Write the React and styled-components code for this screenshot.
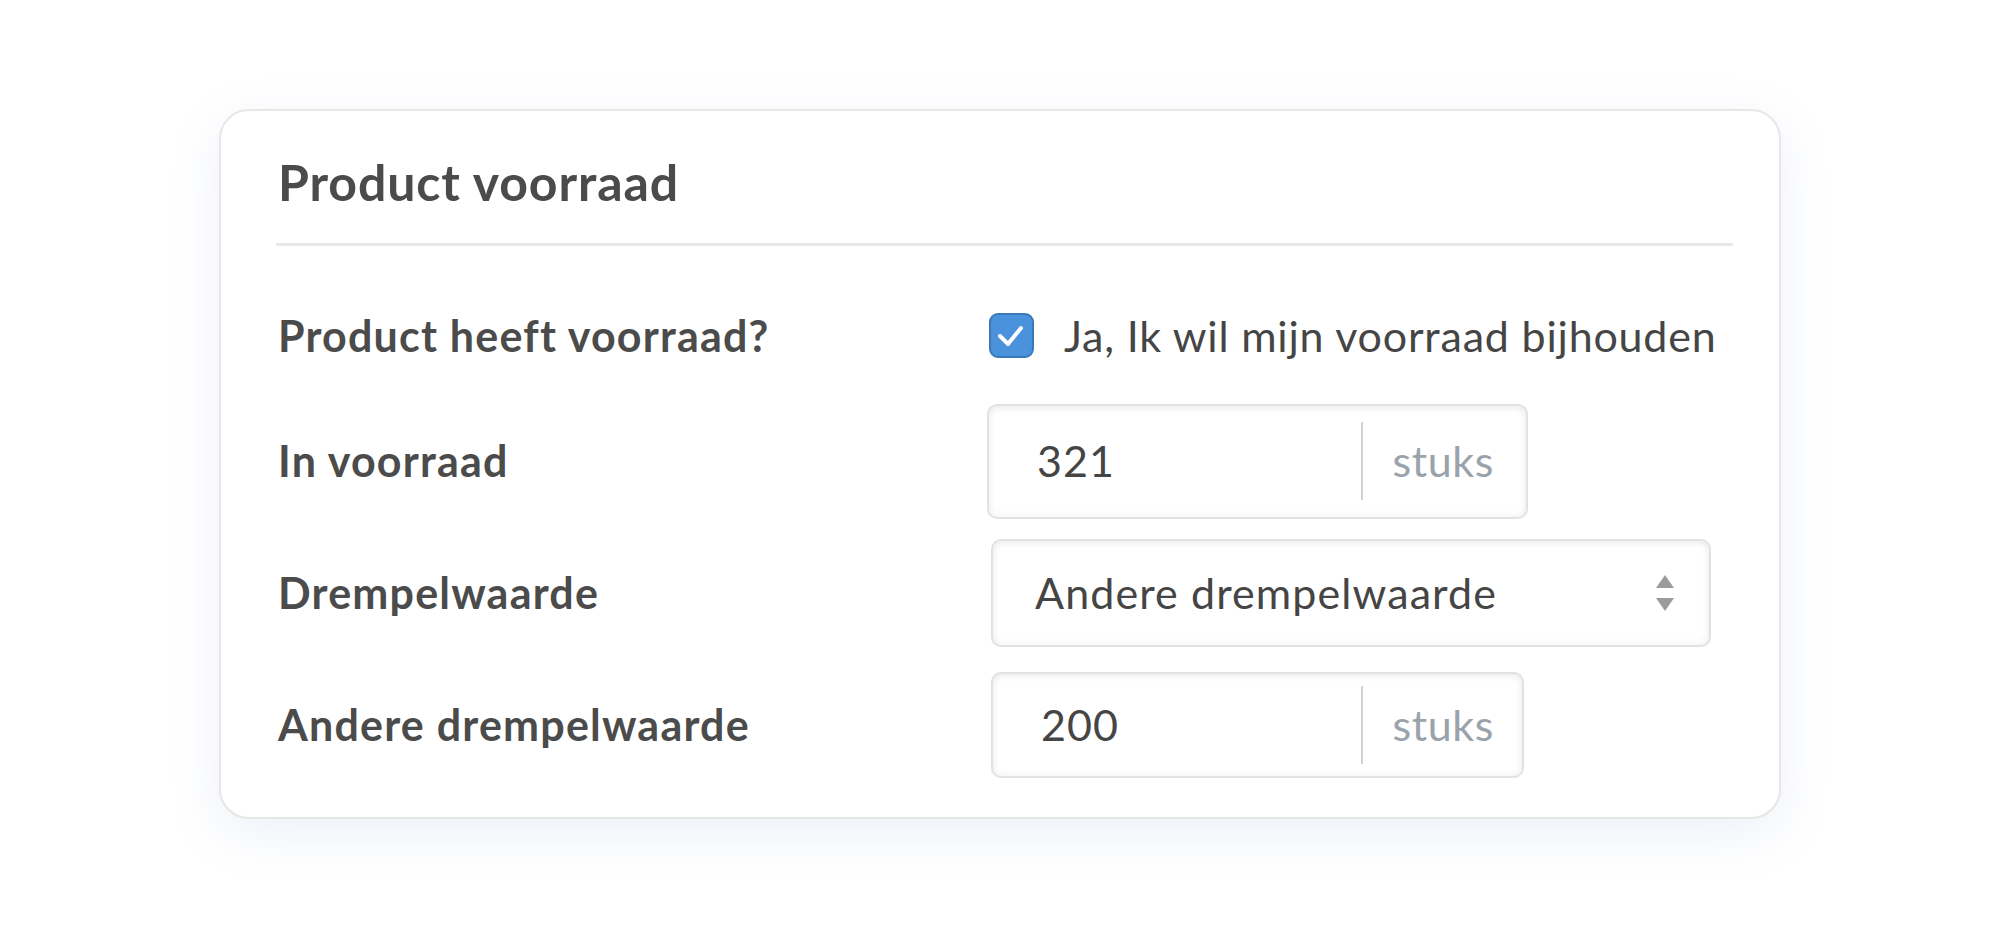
import React from "react"
import styled, { createGlobalStyle } from "styled-components"

const GlobalStyle = createGlobalStyle`
  html, body {
    margin: 0;
    background: #ffffff;
  }
  body {
    font-family: Lato, "Liberation Sans", sans-serif;
    color: #4d4d4d;
  }
`

const Page = styled.div`
  display: flex;
  justify-content: center;
  padding-top: 109px;
  min-height: 942px;
  box-sizing: border-box;
`

const Card = styled.section`
  box-sizing: border-box;
  width: 1562px;
  height: 710px;
  background: #fff;
  border: 2px solid #e7e7e8;
  border-radius: 30px;
  box-shadow: 0 14px 50px rgba(110, 140, 200, 0.13);
  padding: 41px 46px 0 57px;
`

const Title = styled.h2`
  margin: 0;
  font-size: 50px;
  line-height: 1.2;
  font-weight: 700;
  letter-spacing: 0.9px;
  color: #4b4b4b;
`

const Divider = styled.hr`
  margin: 31px 0 0 -2px;
  border: 0;
  height: 3px;
  background: #e8e8e8;
`

const Row = styled.div`
  display: flex;
  align-items: center;
  margin-top: ${p => p.$space}px;
`

const Label = styled.div`
  width: 711px;
  flex-shrink: 0;
  font-size: 43px;
  line-height: 1.2;
  font-weight: 700;
  letter-spacing: 1.2px;
  color: #4b4b4b;
`

const CheckLabel = styled.label`
  display: flex;
  align-items: center;
  gap: 30px;
  font-size: 43px;
  line-height: 1.2;
  letter-spacing: 0.8px;
  color: #454545;
`

const CheckBox = styled.span`
  box-sizing: border-box;
  width: 45px;
  height: 45px;
  border-radius: 9px;
  background: #4a92dc;
  border: 2px solid #3a79b9;
  display: flex;
  align-items: center;
  justify-content: center;
`

const Field = styled.div`
  box-sizing: border-box;
  display: flex;
  align-items: center;
  width: ${p => p.$width}px;
  height: ${p => p.$height}px;
  margin-left: ${p => p.$shift || 0}px;
  border: 2px solid #e2e2e2;
  border-radius: 10px;
  background: #fff;
  box-shadow: inset 0 0 10px rgba(0, 0, 0, 0.06), inset 0 3px 6px rgba(0, 0, 0, 0.04);
`

const Value = styled.div`
  flex: 1;
  padding-left: ${p => p.$pad || 48}px;
  font-size: 43px;
  line-height: 1.2;
  letter-spacing: 1.1px;
  color: #454545;
`

const Sep = styled.div`
  width: 2px;
  height: 78px;
  background: #d2d2d2;
`

const Unit = styled.div`
  padding: 0 ${p => p.$right}px 0 30px;
  font-size: 43px;
  line-height: 1.2;
  letter-spacing: 0.6px;
  color: #9aa2ab;
`

const Arrows = styled.div`
  display: flex;
  flex-direction: column;
  align-items: center;
  gap: 10px;
  margin-right: 35px;
`

const Tri = styled.span`
  width: 0;
  height: 0;
  border-left: 9px solid transparent;
  border-right: 9px solid transparent;
  ${p => (p.$up ? "border-bottom" : "border-top")}: 13px solid #9b9b9b;
`

const UnitField = ({ value, width, height, shift, right }) => (
  <Field $width={width} $height={height} $shift={shift}>
    <Value>{value}</Value>
    <Sep />
    <Unit $right={right}>stuks</Unit>
  </Field>
)

export default function App() {
  return (
    <>
      <GlobalStyle />
      <Page>
        <Card>
          <Title>Product voorraad</Title>
          <Divider />

          <Row $space={64}>
            <Label>Product heeft voorraad?</Label>
            <CheckLabel>
              <CheckBox>
                <svg width="41" height="41" viewBox="0 0 41 41">
                  <polyline points="9,21 17,29 30,13" fill="none" stroke="#fff" strokeWidth="4" strokeLinecap="round" strokeLinejoin="round" />
                </svg>
              </CheckBox>
              Ja, Ik wil mijn voorraad bijhouden
            </CheckLabel>
          </Row>

          <Row $space={42}>
            <Label>In voorraad</Label>
            <UnitField value="321" width={541} height={115} shift={-2} right={32} />
          </Row>

          <Row $space={20}>
            <Label>Drempelwaarde</Label>
            <Field $width={720} $height={108} $shift={2}>
              <Value $pad={42}>Andere drempelwaarde</Value>
              <Arrows>
                <Tri $up />
                <Tri />
              </Arrows>
            </Field>
          </Row>

          <Row $space={25}>
            <Label>Andere drempelwaarde</Label>
            <UnitField value="200" width={533} height={106} shift={2} right={28} />
          </Row>
        </Card>
      </Page>
    </>
  )
}
